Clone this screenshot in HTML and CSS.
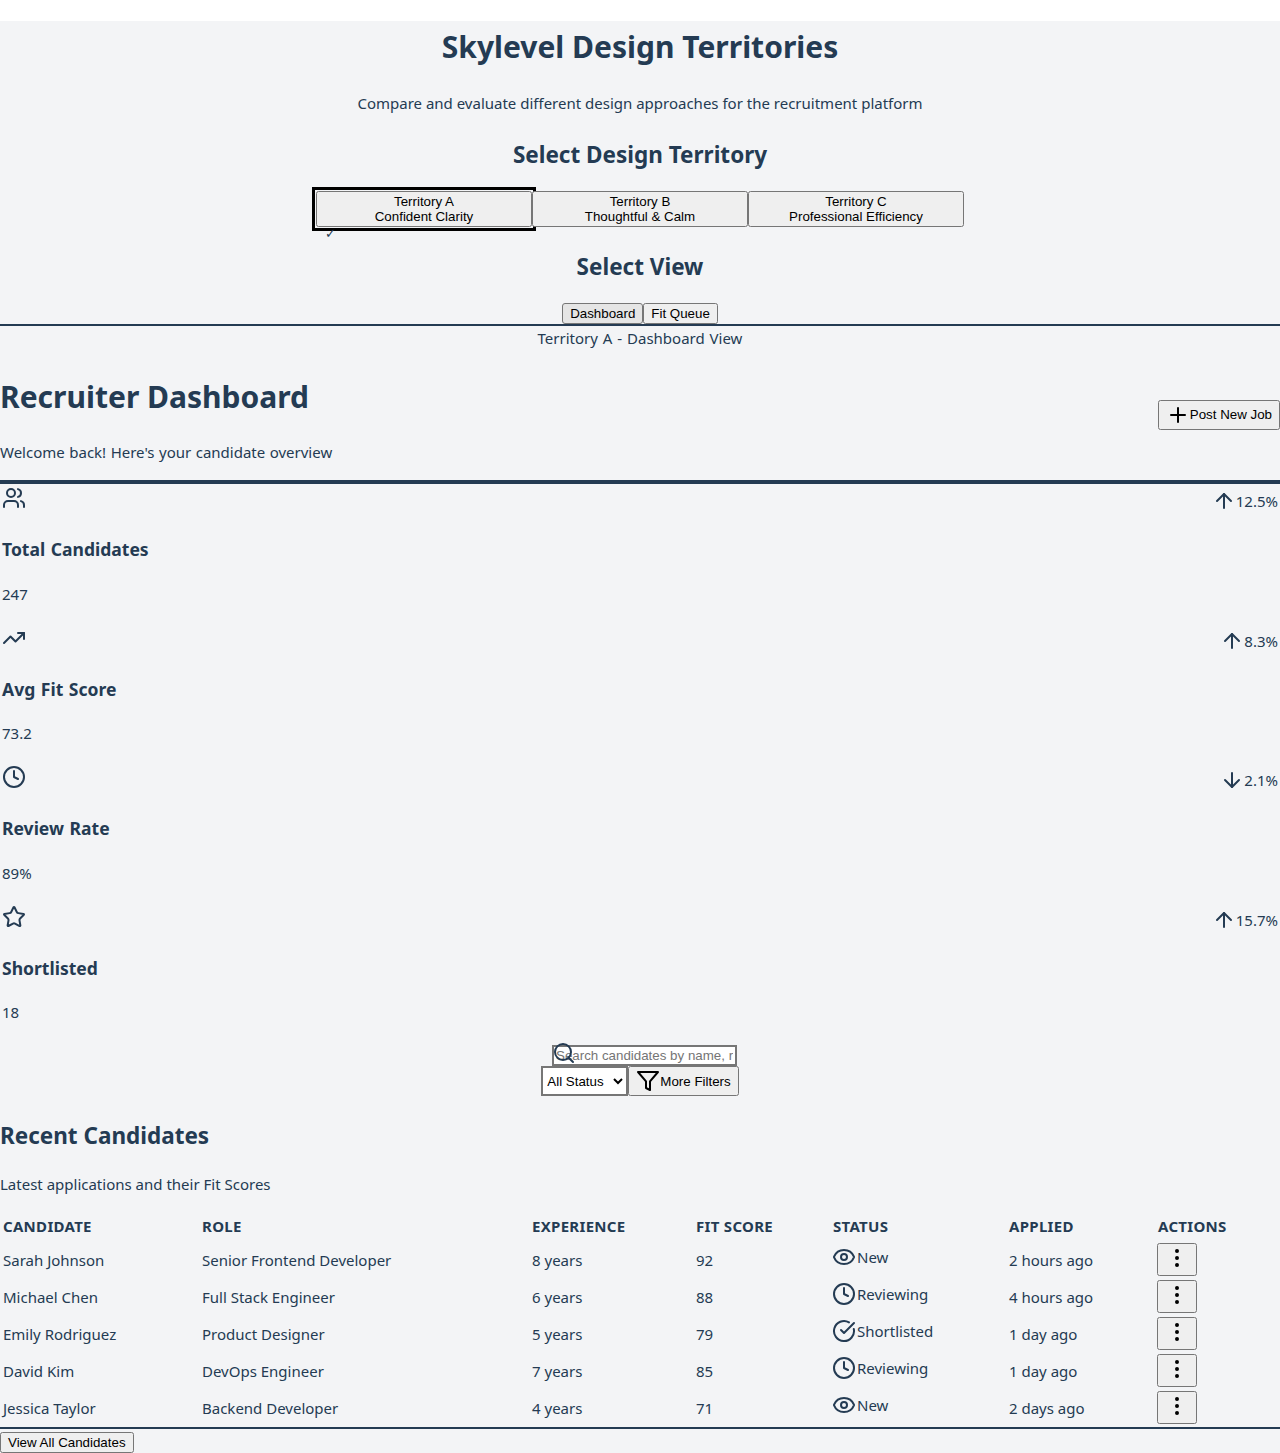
FILE: index.html
```html
<!DOCTYPE html>
<html lang="en">
<head>
<meta charset="utf-8">
<title>Skylevel Design Territories</title>
<link rel="stylesheet" href="styles.css">
</head>
<body>
<svg class="sprite" width="0" height="0" aria-hidden="true">
  <symbol id="i-users" viewBox="0 0 24 24"><path d="M16 21v-2a4 4 0 0 0-4-4H6a4 4 0 0 0-4 4v2"/><circle cx="9" cy="7" r="4"/><path d="M22 21v-2a4 4 0 0 0-3-3.87"/><path d="M16 3.13a4 4 0 0 1 0 7.75"/></symbol>
  <symbol id="i-trend" viewBox="0 0 24 24"><path d="M22 7l-8.5 8.5-5-5L2 17"/><path d="M16 7h6v6"/></symbol>
  <symbol id="i-clock" viewBox="0 0 24 24"><circle cx="12" cy="12" r="10"/><path d="M12 6v6l4 2"/></symbol>
  <symbol id="i-star" viewBox="0 0 24 24"><path d="M11.525 2.295a.53.53 0 0 1 .95 0l2.31 4.679a2.123 2.123 0 0 0 1.595 1.16l5.166.756a.53.53 0 0 1 .294.904l-3.736 3.638a2.123 2.123 0 0 0-.611 1.878l.882 5.14a.53.53 0 0 1-.771.56l-4.618-2.428a2.122 2.122 0 0 0-1.973 0L6.396 21.01a.53.53 0 0 1-.77-.56l.881-5.139a2.122 2.122 0 0 0-.611-1.879L2.16 9.795a.53.53 0 0 1 .294-.906l5.165-.755a2.122 2.122 0 0 0 1.597-1.16z"/></symbol>
  <symbol id="i-up" viewBox="0 0 24 24"><path d="M12 19V5"/><path d="M5 12l7-7 7 7"/></symbol>
  <symbol id="i-down" viewBox="0 0 24 24"><path d="M12 5v14"/><path d="M19 12l-7 7-7-7"/></symbol>
  <symbol id="i-plus" viewBox="0 0 24 24"><path d="M5 12h14"/><path d="M12 5v14"/></symbol>
  <symbol id="i-search" viewBox="0 0 24 24"><circle cx="11" cy="11" r="8"/><path d="M21 21l-4.3-4.3"/></symbol>
  <symbol id="i-filter" viewBox="0 0 24 24"><path d="M22 3H2l8 9.46V19l4 2v-8.54L22 3z"/></symbol>
  <symbol id="i-eye" viewBox="0 0 24 24"><path d="M2.062 12.348a1 1 0 0 1 0-.696 10.75 10.75 0 0 1 19.876 0 1 1 0 0 1 0 .696 10.75 10.75 0 0 1-19.876 0"/><circle cx="12" cy="12" r="3"/></symbol>
  <symbol id="i-check" viewBox="0 0 24 24"><path d="M21.801 10A10 10 0 1 1 17 3.335"/><path d="M9 11l3 3L22 4"/></symbol>
  <symbol id="i-more" viewBox="0 0 24 24"><circle cx="12" cy="12" r="1"/><circle cx="12" cy="5" r="1"/><circle cx="12" cy="19" r="1"/></symbol>
</svg>
<div class="app">
  <header class="chooser">
    <h1>Skylevel Design Territories</h1>
    <p>Compare and evaluate different design approaches for the recruitment platform</p>
    <h2>Select Design Territory</h2>
    <div class="territories">
      <button class="territory is-active" type="button">Territory A<br>Confident Clarity<span class="tick">✓</span></button>
      <button class="territory" type="button">Territory B<br>Thoughtful &amp; Calm</button>
      <button class="territory" type="button">Territory C<br>Professional Efficiency</button>
    </div>
    <h2>Select View</h2>
    <div class="views">
      <button class="view is-current" type="button">Dashboard</button>
      <button class="view" type="button">Fit Queue</button>
    </div>
  </header>
  <div class="view-label">Territory A - Dashboard View</div>
  <section class="page-head">
    <div>
      <h1>Recruiter Dashboard</h1>
      <p class="welcome">Welcome back! Here's your candidate overview</p>
    </div>
    <button class="post-job" type="button"><svg class="icon"><use href="#i-plus"/></svg>Post New Job</button>
  </section>
  <section class="stats">
    <article class="stat">
      <div class="stat-top"><svg class="icon"><use href="#i-users"/></svg><span class="trend"><svg class="icon"><use href="#i-up"/></svg>12.5%</span></div>
      <h3>Total Candidates</h3>
      <p>247</p>
    </article>
    <article class="stat">
      <div class="stat-top"><svg class="icon"><use href="#i-trend"/></svg><span class="trend"><svg class="icon"><use href="#i-up"/></svg>8.3%</span></div>
      <h3>Avg Fit Score</h3>
      <p>73.2</p>
    </article>
    <article class="stat">
      <div class="stat-top"><svg class="icon"><use href="#i-clock"/></svg><span class="trend"><svg class="icon"><use href="#i-down"/></svg>2.1%</span></div>
      <h3>Review Rate</h3>
      <p>89%</p>
    </article>
    <article class="stat">
      <div class="stat-top"><svg class="icon"><use href="#i-star"/></svg><span class="trend"><svg class="icon"><use href="#i-up"/></svg>15.7%</span></div>
      <h3>Shortlisted</h3>
      <p>18</p>
    </article>
  </section>
  <section class="filters">
    <div class="search">
      <svg class="icon search-icon"><use href="#i-search"/></svg>
      <input class="search-input" type="text" placeholder="Search candidates by name, role, or skill">
    </div>
    <div class="filter-row">
      <select class="status-select"><option>All Status</option></select>
      <button class="more-filters" type="button"><svg class="icon icon-black"><use href="#i-filter"/></svg>More Filters</button>
    </div>
  </section>
  <section class="recent">
    <h2>Recent Candidates</h2>
    <p>Latest applications and their Fit Scores</p>
    <table class="candidates">
      <colgroup>
        <col class="c1"><col class="c2"><col class="c3"><col class="c4"><col class="c5"><col class="c6"><col class="c7">
      </colgroup>
      <thead>
        <tr><th>CANDIDATE</th><th>ROLE</th><th>EXPERIENCE</th><th>FIT SCORE</th><th class="nudged">STATUS</th><th class="nudged">APPLIED</th><th class="nudged">ACTIONS</th></tr>
      </thead>
      <tbody>
        <tr><td>Sarah Johnson</td><td>Senior Frontend Developer</td><td>8 years</td><td>92</td><td><span class="status"><svg class="icon"><use href="#i-eye"/></svg>New</span></td><td class="nudged">2 hours ago</td><td><button class="row-menu" type="button"><svg class="icon icon-black"><use href="#i-more"/></svg></button></td></tr>
        <tr><td>Michael Chen</td><td>Full Stack Engineer</td><td>6 years</td><td>88</td><td><span class="status"><svg class="icon"><use href="#i-clock"/></svg>Reviewing</span></td><td class="nudged">4 hours ago</td><td><button class="row-menu" type="button"><svg class="icon icon-black"><use href="#i-more"/></svg></button></td></tr>
        <tr><td>Emily Rodriguez</td><td>Product Designer</td><td>5 years</td><td>79</td><td><span class="status"><svg class="icon"><use href="#i-check"/></svg>Shortlisted</span></td><td class="nudged">1 day ago</td><td><button class="row-menu" type="button"><svg class="icon icon-black"><use href="#i-more"/></svg></button></td></tr>
        <tr><td>David Kim</td><td>DevOps Engineer</td><td>7 years</td><td>85</td><td><span class="status"><svg class="icon"><use href="#i-clock"/></svg>Reviewing</span></td><td class="nudged">1 day ago</td><td><button class="row-menu" type="button"><svg class="icon icon-black"><use href="#i-more"/></svg></button></td></tr>
        <tr><td>Jessica Taylor</td><td>Backend Developer</td><td>4 years</td><td>71</td><td><span class="status"><svg class="icon"><use href="#i-eye"/></svg>New</span></td><td class="nudged">2 days ago</td><td><button class="row-menu" type="button"><svg class="icon icon-black"><use href="#i-more"/></svg></button></td></tr>
      </tbody>
    </table>
    <div class="table-foot"><button class="view-all" type="button">View All Candidates</button></div>
  </section>
</div>
</body>
</html>
```

FILE: styles.css
```css
* { box-sizing: border-box; }
html, body { margin: 0; padding: 0; background: #fff; }
body {
  font-family: "Noto Sans", sans-serif;
  font-size: 15px;
  line-height: 24px;
  color: #243b53;
}
.sprite { position: absolute; }
button, select, input {
  font-family: "Liberation Sans", Arial, sans-serif;
  font-size: 13.3333px;
  line-height: normal;
  color: #000;
  box-sizing: border-box;
}
.app { background: #f3f4f6; min-height: 1432px; }
h1 { font-size: 30px; line-height: 44px; padding-top: 4px; font-weight: 700; margin: 21.44px 0; }
h2 { font-size: 22.5px; line-height: 32px; padding-top: 4px; font-weight: 700; margin: 19.92px 0; }
h3 { font-size: 17.55px; line-height: 28.08px; font-weight: 700; margin: 18.72px 0; word-spacing: 1px; }
p { margin: 16px 0; }
.icon { width: 24px; height: 24px; fill: none; stroke: #243b53; stroke-width: 2; stroke-linecap: round; stroke-linejoin: round; }
.icon-black { stroke: #000; }
.post-job .icon { stroke: #000; }

.chooser { text-align: center; border-bottom: 2px solid #243b53; }
.territories { display: flex; justify-content: center; }
.territory { width: 216px; position: relative; }
.territory.is-active { outline: 3px solid #000; outline-offset: 1px; }
.tick { position: absolute; left: 7px; top: 100%; margin-top: 2px; font-family: "DejaVu Sans", sans-serif; font-size: 13px; line-height: 14px; color: #243b53; }
.views { display: flex; justify-content: center; }
.view.is-current { background: #e5e5e5; border: 1px solid #767676; border-radius: 3px; padding: 2px 7px; }
.view-label { text-align: center; word-spacing: 1px; }

.page-head { display: flex; justify-content: space-between; align-items: center; border-bottom: 4px solid #243b53; }
.welcome { word-spacing: .6px; }
.post-job { display: inline-flex; align-items: center; }

.stat { padding: 2px; }
.stat-top { display: flex; justify-content: space-between; align-items: flex-start; height: 30px; }
.trend { display: inline-flex; align-items: center; margin-top: 3px; }

.filters { display: flex; flex-direction: column; align-items: center; }
.search { position: relative; width: 185px; margin: 3px 0 0 9px; height: 21px; }
.search-input { width: 185px; height: 21px; border: 2px solid #767676; padding: 1px 2px; background: #fff; display: block; }
.search-icon { position: absolute; left: 0; top: -4px; }
.filter-row { display: flex; }
.status-select { width: 87px; border: 2px solid #767676; background-color: #fff; }
.more-filters { display: inline-flex; align-items: center; }

.candidates { width: 100%; table-layout: fixed; border-spacing: 2px; border-collapse: separate; text-align: left; }
.candidates th, .candidates td { padding: 1px; }
.candidates th { padding-top: 0; padding-bottom: 2px; letter-spacing: .3px; }
.candidates .nudged { padding-left: 2px; }
.c1 { width: 197px; } .c2 { width: 328px; } .c3 { width: 162px; } .c4 { width: 134px; }
.c5 { width: 174px; } .c6 { width: 147px; } .c7 { width: 122px; }
.status { display: flex; align-items: center; gap: 1px; margin-bottom: 6px; }
.table-foot { border-top: 2px solid #243b53; padding-top: 3px; }
.view-all { display: block; }
```
